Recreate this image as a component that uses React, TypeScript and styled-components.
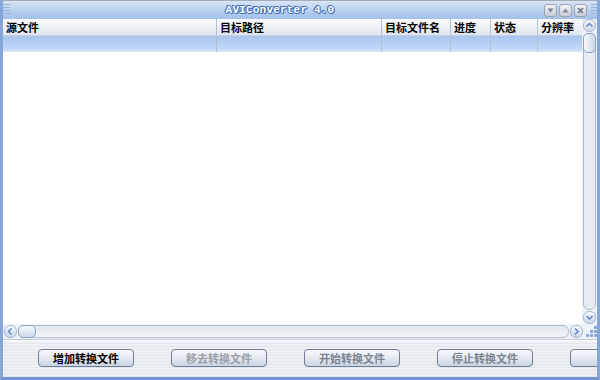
import styled, { createGlobalStyle } from "styled-components";

const GlobalStyle = createGlobalStyle`
  html, body {
    margin: 0;
    padding: 0;
    background: #ffffff;
  }
  body {
    font-family: "Noto Sans CJK SC", "Liberation Sans", sans-serif;
  }
`;

const Window = styled.div`
  width: 600px;
  height: 380px;
  box-sizing: border-box;
  display: flex;
  flex-direction: column;
  border-left: 3px solid #86a6d8;
  border-right: 3px solid #86a6d8;
  border-bottom: 3px solid #6f93d0;
  background: #ffffff;
  overflow: hidden;
`;

const TitleBar = styled.div`
  height: 19px;
  flex: none;
  display: flex;
  align-items: center;
  border-top: 1px solid #a4acb8;
  box-sizing: border-box;
  background: linear-gradient(#d6e4f6, #b7cfee 55%, #a2c0ea);
  margin: 0 -3px;
  padding: 0 2px 0 3px;
`;

const Grip = styled.div`
  width: 7px;
  height: 12px;
  flex: none;
  background: repeating-linear-gradient(
    #9fb4d4 0px,
    #9fb4d4 1px,
    transparent 1px,
    transparent 3px
  );
`;

const Title = styled.div`
  flex: 1;
  text-align: center;
  padding-left: 6px;
  font-family: "Liberation Mono", monospace;
  font-weight: bold;
  font-size: 11px;
  color: #ffffff;
  text-shadow: 1px 0 0 #4470b8, -1px 0 0 #4470b8, 0 1px 0 #4470b8,
    0 -1px 0 #4470b8, 1px 1px 0 #4470b8, -1px -1px 0 #4470b8;
  letter-spacing: 0.2px;
`;

const TitleButtons = styled.div`
  display: flex;
  gap: 2px;
  margin-right: 4px;
`;

const TitleBtn = styled.div`
  width: 11px;
  height: 11px;
  border-radius: 3px;
  border: 1px solid #9aa4b2;
  background: linear-gradient(#f2f4f8, #c6ccd6);
  display: flex;
  align-items: center;
  justify-content: center;
`;

const Body = styled.div`
  flex: 1;
  display: flex;
  min-height: 0;
`;

const ListArea = styled.div`
  flex: 1;
  display: flex;
  flex-direction: column;
  min-width: 0;
`;

const Header = styled.div`
  display: grid;
  grid-template-columns: 214px 165px 69px 40px 47px 1fr;
  height: 33px;
  flex: none;
`;

const HeaderCell = styled.div`
  display: flex;
  flex-direction: column;
  border-right: 1px solid #b4c0d0;
  &:last-child {
    border-right: none;
  }
`;

const HeaderLabel = styled.div`
  height: 16px;
  line-height: 16px;
  padding-left: 3px;
  font-size: 11px;
  font-weight: bold;
  color: #000000;
  white-space: nowrap;
  background: linear-gradient(#fbfcfe, #dfe5ee);
  border-bottom: 1px solid #c6d2e2;
`;

const HeaderBand = styled.div`
  flex: 1;
  background: linear-gradient(#a6c5ee, #c4daf7);
  border-bottom: 2px solid #d6e4f6;
`;

const ListBody = styled.div`
  flex: 1;
  background: #ffffff;
`;

const VScroll = styled.div`
  width: 14px;
  flex: none;
  display: flex;
  flex-direction: column;
  gap: 1px;
  padding-left: 1px;
  background: #eef2f8;
`;

const ArrowBtn = styled.div`
  width: 13px;
  height: 13px;
  flex: none;
  box-sizing: border-box;
  border: 1px solid #a8b8d0;
  border-radius: 6px;
  background: linear-gradient(#f4f7fc, #cbd8ec);
  display: flex;
  align-items: center;
  justify-content: center;
`;

const VTrack = styled.div`
  flex: 1;
  display: flex;
  flex-direction: column;
  box-sizing: border-box;
  border: 1px solid #b0bccc;
  border-radius: 6px;
  background: #e6ebf3;
  width: 13px;
`;

const VThumb = styled.div`
  height: 20px;
  box-sizing: border-box;
  border: 1px solid #8ea2c0;
  border-radius: 5px;
  margin: -1px;
  background: linear-gradient(90deg, #f6f8fc, #ccd8ea);
`;

const HScroll = styled.div`
  height: 15px;
  flex: none;
  display: flex;
  align-items: center;
  gap: 1px;
  padding: 0 0 0 1px;
  background: #eef2f8;
  border-bottom: 1px solid #c0c8d4;
`;

const HTrack = styled.div`
  flex: 1;
  height: 13px;
  box-sizing: border-box;
  border: 1px solid #b0bccc;
  border-radius: 6px;
  background: linear-gradient(#e2e7ef, #f2f4f8);
  display: flex;
`;

const HThumb = styled.div`
  width: 18px;
  margin: -1px;
  box-sizing: border-box;
  border: 1px solid #8ea2c0;
  border-radius: 5px;
  background: linear-gradient(#f6f8fc, #ccd8ea);
`;

const CornerGrip = styled.div`
  width: 11px;
  height: 11px;
  margin-left: 2px;
  display: grid;
  grid-template-columns: repeat(3, 3px);
  grid-template-rows: repeat(3, 3px);
  gap: 1px;
  flex: none;
`;

const Dot = styled.div<{ $on: boolean }>`
  background: ${(p) => (p.$on ? "#7fa4dc" : "transparent")};
  border-radius: 1px;
`;

const ButtonBar = styled.div`
  height: 36px;
  flex: none;
  display: flex;
  align-items: center;
  gap: 37px;
  padding-left: 35px;
  background: repeating-linear-gradient(
    #eef0f4 0px,
    #eef0f4 2px,
    #e3e7ed 2px,
    #e3e7ed 3px
  );
  border-top: 1px solid #ffffff;
`;

const ActionButton = styled.button<{ $tone: "main" | "off" | "dim" }>`
  width: 96px;
  height: 18px;
  flex: none;
  padding: 0;
  margin-top: -2px;
  border: 1px solid #6f7f98;
  border-radius: 4px;
  background: linear-gradient(#f8f9fc, #dfe5ee 60%, #c9d3e2);
  font-family: "Noto Sans CJK SC", "Liberation Sans", sans-serif;
  font-size: 11px;
  font-weight: bold;
  line-height: 16px;
  color: ${(p) =>
    p.$tone === "main" ? "#000000" : p.$tone === "dim" ? "#7c8492" : "#9aa0aa"};
`;

const Arrow = ({ dir }: { dir: "up" | "down" | "left" | "right" }) => {
  const paths: Record<string, string> = {
    up: "M1.5 5.5 L4.5 2.5 L7.5 5.5",
    down: "M1.5 3 L4.5 6 L7.5 3",
    left: "M5.5 1.5 L2.5 4.5 L5.5 7.5",
    right: "M3 1.5 L6 4.5 L3 7.5",
  };
  return (
    <svg width="9" height="9" viewBox="0 0 9 9">
      <path d={paths[dir]} fill="none" stroke="#5a7fbf" strokeWidth="1.4" />
    </svg>
  );
};

const columns = ["源文件", "目标路径", "目标文件名", "进度", "状态", "分辨率"];
const buttons: { label: string; tone: "main" | "off" | "dim" }[] = [
  { label: "增加转换文件", tone: "main" },
  { label: "移去转换文件", tone: "off" },
  { label: "开始转换文件", tone: "dim" },
  { label: "停止转换文件", tone: "dim" },
  { label: "", tone: "dim" },
];
const gripDots = [false, false, true, false, true, true, true, true, true];

export default function App() {
  return (
    <>
      <GlobalStyle />
      <Window>
        <TitleBar>
          <Grip />
          <Title>AVIConverter 4.0</Title>
          <TitleButtons>
            <TitleBtn>
              <svg width="7" height="7" viewBox="0 0 7 7">
                <path d="M0.5 1.5 H6.5 L3.5 5.5 Z" fill="#7a8494" />
              </svg>
            </TitleBtn>
            <TitleBtn>
              <svg width="7" height="7" viewBox="0 0 7 7">
                <path d="M0.5 5.5 H6.5 L3.5 1.5 Z" fill="#7a8494" />
              </svg>
            </TitleBtn>
            <TitleBtn>
              <svg width="7" height="7" viewBox="0 0 7 7">
                <path d="M1 1 L6 6 M6 1 L1 6" stroke="#6c7686" strokeWidth="1.6" />
              </svg>
            </TitleBtn>
          </TitleButtons>
          <Grip />
        </TitleBar>
        <Body>
          <ListArea>
            <Header>
              {columns.map((c) => (
                <HeaderCell key={c}>
                  <HeaderLabel>{c}</HeaderLabel>
                  <HeaderBand />
                </HeaderCell>
              ))}
            </Header>
            <ListBody />
          </ListArea>
          <VScroll>
            <ArrowBtn>
              <Arrow dir="up" />
            </ArrowBtn>
            <VTrack>
              <VThumb />
            </VTrack>
            <ArrowBtn>
              <Arrow dir="down" />
            </ArrowBtn>
          </VScroll>
        </Body>
        <HScroll>
          <ArrowBtn>
            <Arrow dir="left" />
          </ArrowBtn>
          <HTrack>
            <HThumb />
          </HTrack>
          <ArrowBtn>
            <Arrow dir="right" />
          </ArrowBtn>
          <CornerGrip>
            {gripDots.map((on, i) => (
              <Dot key={i} $on={on} />
            ))}
          </CornerGrip>
        </HScroll>
        <ButtonBar>
          {buttons.map((b, i) => (
            <ActionButton key={i} $tone={b.tone}>
              {b.label}
            </ActionButton>
          ))}
        </ButtonBar>
      </Window>
    </>
  );
}
